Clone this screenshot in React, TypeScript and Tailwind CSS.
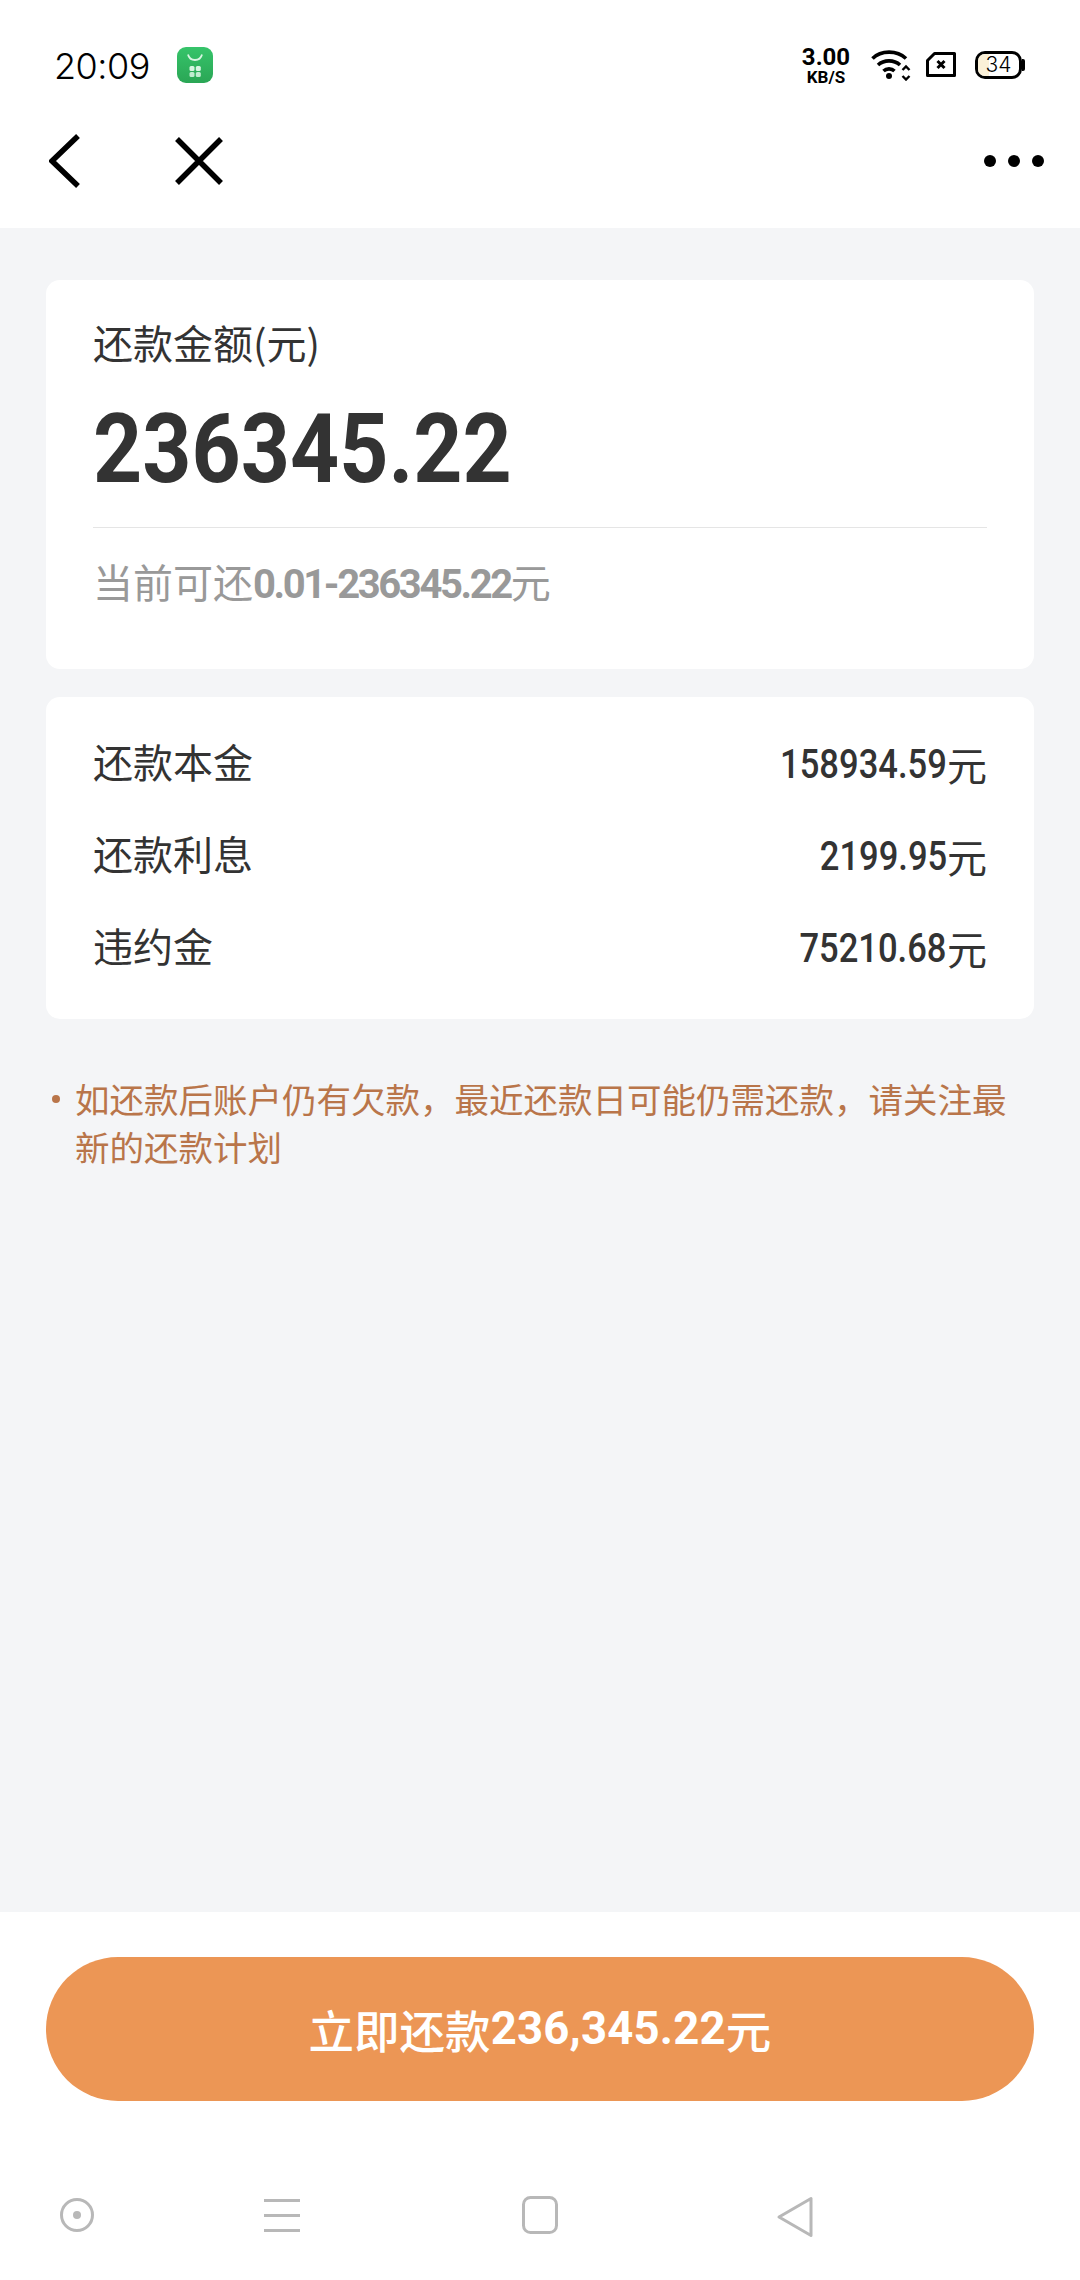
const CJK = '"Noto Sans CJK SC", sans-serif';

function Num({ children, className }: { children: React.ReactNode; className?: string }) {
  return <span className={"font-['Roboto','Noto_Sans_CJK_SC',sans-serif] " + (className ?? "")}>{children}</span>;
}

function StatusBar() {
  return (
    <div className="h-[94px] pt-[38px] flex items-center pl-[54px] pr-[55px] text-black">
      <span className="text-[36px] leading-none font-['Inter',sans-serif] font-light tracking-[-0.5px]">20:09</span>
      <svg className="ml-[27px] mt-[-3px]" width="36" height="36" viewBox="0 0 36 36">
        <defs>
          <linearGradient id="g" x1="0" y1="0" x2="0" y2="1">
            <stop offset="0" stopColor="#36c46a" />
            <stop offset="1" stopColor="#2aa655" />
          </linearGradient>
        </defs>
        <rect width="36" height="36" rx="9" fill="url(#g)" />
        <path d="M11 7.500c1 4 3.500 5.500 7 5.500s6-1.500 7-5.500" fill="none" stroke="#d8f5e2" strokeWidth="1.800" />
        <rect x="12.500" y="19" width="5" height="5" rx="1.500" fill="#d8f5e2" />
        <rect x="18.800" y="19" width="5" height="5" rx="1.500" fill="#d8f5e2" />
        <rect x="12.500" y="25" width="5" height="5" rx="1.500" fill="#c0ecd0" />
        <rect x="18.800" y="25" width="5" height="5" rx="1.500" fill="#c0ecd0" />
      </svg>
      <div className="ml-auto flex items-center mt-[-3px]">
        <div className="flex flex-col items-center w-[48px] mt-[2px] font-['Roboto',sans-serif] font-bold">
          <span className="text-[24px] leading-[24px]">3.00</span>
          <span className="text-[17px] leading-[17px]">KB/S</span>
        </div>
        <svg className="ml-[21px]" width="40" height="32" viewBox="0 0 40 32" fill="none" stroke="#000" strokeWidth="3.600">
          <path d="M1.500 9.500C10 1 26 1 35 9.500" />
          <path d="M7 16c6-5.500 16-5.500 22 0" />
          <path d="M12.500 22c3-2.800 8-2.800 11 0" />
          <circle cx="18" cy="27" r="3" fill="#000" stroke="none" />
          <path d="M31.500 21l3.500-3.500 3.500 3.500M31.500 27l3.500 3.500 3.500-3.500" strokeWidth="2.400" />
        </svg>
        <svg className="ml-[15px]" width="30" height="25" viewBox="0 0 30 25" fill="none">
          <path d="M8.500 1.500H28.500V23.500H1.500V8.500Z" stroke="#000" strokeWidth="3" strokeLinejoin="round" />
          <path d="M11.500 9l7 7M18.500 9l-7 7" stroke="#000" strokeWidth="3" />
        </svg>
        <div className="ml-[19px] relative w-[50px] h-[28px]">
          <div className="absolute left-0 top-0 w-[47px] h-[28px] rounded-[10px] border-[3px] border-black overflow-hidden">
            <div className="w-[11px] h-full bg-[#fbf1d8]" />
          </div>
          <div className="absolute right-0 top-[8px] w-[3px] h-[12px] rounded-r-[2px] bg-black" />
          <span className="absolute left-0 top-0 w-[47px] h-[28px] flex items-center justify-center text-[21px] font-light font-['Inter',sans-serif]">34</span>
        </div>
      </div>
    </div>
  );
}

function NavBar() {
  return (
    <div className="h-[134px] flex items-center relative pl-[49px] pr-[36px]">
      <svg width="31" height="54" viewBox="0 0 31 54" fill="none" stroke="#000" strokeWidth="5.500">
        <path d="M29 2L3 27l26 25" />
      </svg>
      <svg className="ml-[95px]" width="48" height="48" viewBox="0 0 48 48" fill="none" stroke="#000" strokeWidth="5.500">
        <path d="M2 2l44 44M46 2L2 46" />
      </svg>
      <div className="ml-auto flex gap-[12px]">
        <span className="w-[12px] h-[12px] rounded-full bg-black" />
        <span className="w-[12px] h-[12px] rounded-full bg-black" />
        <span className="w-[12px] h-[12px] rounded-full bg-black" />
      </div>
    </div>
  );
}

function Row({ label, value }: { label: string; value: string }) {
  return (
    <div className="h-[92px] flex items-center justify-between text-[#333] text-[40px]">
      <span className="font-normal mb-[8px]">{label}</span>
      <span className="flex items-center">
        <Num className="inline-block text-[41px] font-medium origin-right scale-x-[0.843]">{value}</Num>
        <span className="font-normal mb-[3px]">元</span>
      </span>
    </div>
  );
}

function SystemNav() {
  return (
    <div className="h-[179px] relative flex items-start pt-[95px] pl-[60px]">
      <svg width="34" height="38" viewBox="0 0 34 38" fill="none" stroke="#b8b8b8" strokeWidth="3">
        <circle cx="17" cy="19" r="15.500" />
        <circle cx="17" cy="19" r="4" fill="#b8b8b8" stroke="none" />
      </svg>
      <svg className="ml-[170px]" width="36" height="38" viewBox="0 0 36 38" fill="#b8b8b8">
        <rect y="3" width="36" height="3" />
        <rect y="18" width="36" height="3" />
        <rect y="33" width="36" height="3" />
      </svg>
      <svg className="ml-[222px]" width="36" height="38" viewBox="0 0 36 38" fill="none" stroke="#b8b8b8" strokeWidth="3">
        <rect x="1.500" y="1.500" width="33" height="35" rx="7" />
      </svg>
      <svg className="ml-[218px]" width="38" height="42" viewBox="0 0 38 42" fill="none" stroke="#b8b8b8" strokeWidth="3" strokeLinejoin="round">
        <path d="M35 2.500V39.500L3 21Z" />
      </svg>
    </div>
  );
}

export default function App() {
  return (
    <div className="w-[1080px] h-[2280px] flex flex-col bg-white overflow-hidden" style={{ fontFamily: CJK }}>
      <StatusBar />
      <NavBar />
      <main className="flex-1 bg-[#f4f5f7] px-[46px] pt-[52px]">
        <section className="bg-white rounded-[14px] h-[389px] px-[47px] pt-[37px]">
          <div className="text-[40px] leading-[50px] text-[#333]">还款金额(元)</div>
          <div className="mt-[21px] h-[122px] leading-[122px] text-[96px] font-bold text-[#333] font-['Roboto',sans-serif] origin-left scale-x-[0.894] whitespace-nowrap">236345.22</div>
          <div className="mt-[17px] h-[1px] bg-[#e5e5e5]" />
          <div className="mt-[28px] text-[40px] leading-[50px] text-[#999]">
            当前可还<Num className="font-bold tracking-[-2.400px]">0.01-236345.22</Num>元
          </div>
        </section>
        <section className="mt-[28px] bg-white rounded-[14px] h-[322px] px-[47px] pt-[22px]">
          <Row label="还款本金" value="158934.59" />
          <Row label="还款利息" value="2199.95" />
          <Row label="违约金" value="75210.68" />
        </section>
        <div className="mt-[55px] flex pl-[6px] pr-[20px] text-[34.500px] leading-[48px] text-[#b9754a]">
          <span className="w-[8px] h-[8px] rounded-full bg-[#b9754a] mt-[21px] mr-[15px] shrink-0" />
          <p className="m-0">如还款后账户仍有欠款，最近还款日可能仍需还款，请关注最新的还款计划</p>
        </div>
      </main>
      <div className="bg-white px-[46px] pt-[45px]">
        <button className="w-full h-[144px] rounded-[72px] bg-[#ec9655] text-white text-[45.500px] font-medium flex items-center justify-center">
          立即还款<Num className="font-bold tracking-[0.200px]">236,345.22</Num>元
        </button>
      </div>
      <SystemNav />
    </div>
  );
}
